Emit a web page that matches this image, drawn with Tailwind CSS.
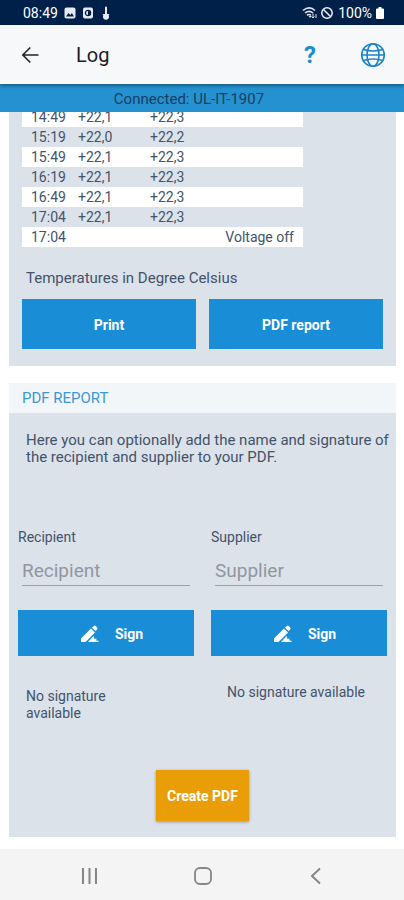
<!DOCTYPE html>
<html lang="en">
<head>
<meta charset="utf-8">
<meta name="viewport" content="width=device-width, initial-scale=1">
<title>Log</title>
<script src="https://cdn.jsdelivr.net/npm/@tailwindcss/browser@4"></script>
</head>
<body class="flex h-screen flex-col overflow-hidden bg-white font-['Roboto',sans-serif] text-sm text-[#43536a]">

<div class="flex h-[25px] shrink-0 items-center justify-between bg-[#00204a] pr-5 pl-[23px] text-white">
  <div class="flex items-center gap-1.5">
    <span>08:49</span>
    <svg class="size-3" viewBox="0 0 12 12" aria-hidden="true"><rect x=".5" y=".5" width="11" height="11" rx="2" fill="#e8ecf2"/><path d="M2 9.5 4.500 6l1.800 2 1.600-2L10 9.500z" fill="#00204a"/></svg>
    <svg class="size-3" viewBox="0 0 12 12" aria-hidden="true"><rect x="1" y=".5" width="10" height="11" rx="2" fill="#e8ecf2"/><circle cx="6" cy="6" r="2.600" fill="none" stroke="#00204a" stroke-width="1.300"/><path d="M6 3.500v5A2.500 2.500 0 0 0 6 3.500z" fill="#00204a"/></svg>
    <svg class="ml-0.5 h-3.5 w-2" viewBox="0 0 8 14" aria-hidden="true"><path d="M3 1.500a1 1 0 0 1 2 0V8a3 3 0 1 1-2 0z" fill="#e8ecf2"/><path d="M.5 8h7L4 13z" fill="#e8ecf2"/></svg>
  </div>
  <div class="flex items-center">
    <svg class="h-3.5 w-4" viewBox="0 0 16 14" aria-hidden="true" fill="none" stroke="#dfe4ec" stroke-width="1.600"><path d="M1 4.500c4-3.300 8.500-3.300 12 0M3 7c2.700-2.200 5.500-2.200 8 0M5 9.300c1.300-1 2.700-1 4 0"/><path d="m8 12-1.500-2h3z" fill="#dfe4ec" stroke="none"/><path d="M11 7.500v4.500m-1.500-1.500L11 12l1.500-1.500M14 12V8" stroke-width="1"/></svg>
    <svg class="ml-0.5 size-3.5" viewBox="0 0 14 14" aria-hidden="true" fill="none" stroke="#eef1f5" stroke-width="1.500"><circle cx="7" cy="7" r="5.200"/><path d="m3.500 3.500 7 7"/></svg>
    <span class="ml-1">100%</span>
    <svg class="ml-1 h-3.5 w-2" viewBox="0 0 8 14" aria-hidden="true"><path d="M2.500 1h3v1.500H7a1 1 0 0 1 1 1V12a1 1 0 0 1-1 1H1a1 1 0 0 1-1-1V3.500a1 1 0 0 1 1-1h1.500z" fill="#fff"/></svg>
  </div>
</div>

<header class="z-10 flex h-[59px] shrink-0 items-center bg-[#f7f8fa] pr-[18px] pl-5 shadow-[0_2px_3px_rgba(0,0,0,0.35)]">
  <button type="button" aria-label="Back">
    <svg class="size-5" viewBox="0 0 20 20" aria-hidden="true" fill="none" stroke="#222" stroke-width="1.600"><path d="M18.500 10H3M10.300 2.500 2.800 10l7.500 7.500"/></svg>
  </button>
  <h1 class="ml-9 text-xl text-[#1c1c1e]">Log</h1>
  <button type="button" aria-label="Help" class="mr-11 ml-auto text-2xl font-bold text-[#1a8cd3]">?</button>
  <button type="button" aria-label="Language">
    <svg class="size-[26px]" viewBox="0 0 26 26" aria-hidden="true" fill="none" stroke="#1a84c8" stroke-width="1.600"><circle cx="13" cy="13" r="11.300"/><ellipse cx="13" cy="13" rx="6" ry="11.300"/><path d="M3.500 7.500q9.500 3 19 0M3.500 18.500q9.500-3 19 0M1.700 13h22.600"/></svg>
  </button>
</header>
<p class="flex h-7 shrink-0 items-center justify-center bg-[#2492d0] pt-1 pr-[26px] text-[15px] text-[#1b3d60]">Connected: UL-IT-1907</p>

<main class="min-h-0 flex-1 overflow-hidden pr-2 pl-[9px]">
  <section class="-mt-[5px] bg-[#dce2ea] px-[13px] pb-[17px]">
    <table class="w-[281px] table-fixed border-collapse leading-5">
      <colgroup><col class="w-14"><col class="w-[72px]"><col class="w-[60px]"><col></colgroup>
      <tbody>
        <tr class="h-5 odd:bg-white"><td class="p-0 pl-[9px]">14:49</td><td class="p-0">+22,1</td><td class="p-0">+22,3</td><td class="p-0"></td></tr>
        <tr class="h-5 odd:bg-white"><td class="p-0 pl-[9px]">15:19</td><td class="p-0">+22,0</td><td class="p-0">+22,2</td><td class="p-0"></td></tr>
        <tr class="h-5 odd:bg-white"><td class="p-0 pl-[9px]">15:49</td><td class="p-0">+22,1</td><td class="p-0">+22,3</td><td class="p-0"></td></tr>
        <tr class="h-5 odd:bg-white"><td class="p-0 pl-[9px]">16:19</td><td class="p-0">+22,1</td><td class="p-0">+22,3</td><td class="p-0"></td></tr>
        <tr class="h-5 odd:bg-white"><td class="p-0 pl-[9px]">16:49</td><td class="p-0">+22,1</td><td class="p-0">+22,3</td><td class="p-0"></td></tr>
        <tr class="h-5 odd:bg-white"><td class="p-0 pl-[9px]">17:04</td><td class="p-0">+22,1</td><td class="p-0">+22,3</td><td class="p-0"></td></tr>
        <tr class="h-5 odd:bg-white"><td class="p-0 pl-[9px]">17:04</td><td class="p-0"></td><td class="p-0"></td><td class="p-0 pr-[9px] text-right">Voltage off</td></tr>
      </tbody>
    </table>
    <p class="px-1 pt-[21px] text-[15px] leading-5">Temperatures in Degree Celsius</p>
    <div class="mt-[11px] grid grid-cols-2 gap-[13px] font-bold text-white">
      <button type="button" class="h-[50px] bg-[#198dd5] pt-0.5">Print</button>
      <button type="button" class="h-[50px] bg-[#198dd5] pt-0.5">PDF report</button>
    </div>
  </section>

  <section class="mt-[17px]">
    <h2 class="flex h-[30px] items-center bg-[#f3f6f9] px-[13px] pt-0.5 text-[15px] text-[#3c97d3]">PDF REPORT</h2>
    <div class="bg-[#dce2ea] pb-4">
      <p class="pt-[19px] pr-1 pl-[17px] text-[15px] leading-[17px]">Here you can optionally add the name and signature of the recipient and supplier to your PDF.</p>
      <div class="mt-[61px] grid grid-cols-2 gap-[17px] px-[9px]">
        <div>
          <label for="recipient" class="block leading-5">Recipient</label>
          <input id="recipient" type="text" placeholder="Recipient" class="mx-1 mt-2 block h-[31px] w-[calc(100%-8px)] border-b border-[#9aa1aa] text-[19px] outline-none placeholder:text-[#9097a0]">
          <button type="button" class="mt-6 flex h-[46px] w-full items-center bg-[#198dd5] pt-0.5 pl-[63px] font-bold text-white">
            <svg class="size-[18px]" viewBox="0 0 18 18" aria-hidden="true" fill="#fff"><path d="M0 13.500 10 3.500 14 7.500 4.500 17H0z"/><path d="m11 2.700 1.700-1.700q1-1 2 0l1.400 1.400q1 1 0 2L14.700 6z"/><path d="m7 17 5.500-6 1 3 2-.5-.3 2 2.300.2V17z"/></svg>
            <span class="ml-4">Sign</span>
          </button>
          <p class="mt-8 w-28 px-2 leading-[17px]">No signature available</p>
        </div>
        <div>
          <label for="supplier" class="block leading-5">Supplier</label>
          <input id="supplier" type="text" placeholder="Supplier" class="mx-1 mt-2 block h-[31px] w-[calc(100%-8px)] border-b border-[#9aa1aa] text-[19px] outline-none placeholder:text-[#9097a0]">
          <button type="button" class="mt-6 flex h-[46px] w-full items-center bg-[#198dd5] pt-0.5 pl-[63px] font-bold text-white">
            <svg class="size-[18px]" viewBox="0 0 18 18" aria-hidden="true" fill="#fff"><path d="M0 13.500 10 3.500 14 7.500 4.500 17H0z"/><path d="m11 2.700 1.700-1.700q1-1 2 0l1.400 1.400q1 1 0 2L14.700 6z"/><path d="m7 17 5.500-6 1 3 2-.5-.3 2 2.300.2V17z"/></svg>
            <span class="ml-4">Sign</span>
          </button>
          <p class="mt-7 pl-4 leading-[17px]">No signature available</p>
        </div>
      </div>
      <button type="button" class="mx-auto mt-12 block h-[51px] w-[93px] bg-[#e99e08] font-bold text-white shadow-[0_1px_3px_rgba(0,0,0,0.35)]">Create PDF</button>
    </div>
  </section>
</main>

<nav class="grid h-[51px] shrink-0 grid-cols-3 items-center justify-items-center bg-[#f4f4f4] pt-0.5 pr-8 pl-[34px] text-[#858585]">
  <button type="button" aria-label="Recent apps"><svg class="size-[18px]" viewBox="0 0 18 18" aria-hidden="true" fill="none" stroke="currentColor" stroke-width="2"><path d="M2 1v16M8.500 1v16M15 1v16"/></svg></button>
  <button type="button" aria-label="Home"><svg class="size-[18px]" viewBox="0 0 18 18" aria-hidden="true" fill="none" stroke="currentColor" stroke-width="1.800"><rect x="1" y="1" width="16" height="16" rx="5"/></svg></button>
  <button type="button" aria-label="Back"><svg class="size-[18px]" viewBox="0 0 18 18" aria-hidden="true" fill="none" stroke="currentColor" stroke-width="2"><path d="m13 1.500-8 7.500 8 7.500"/></svg></button>
</nav>
</body>
</html>
